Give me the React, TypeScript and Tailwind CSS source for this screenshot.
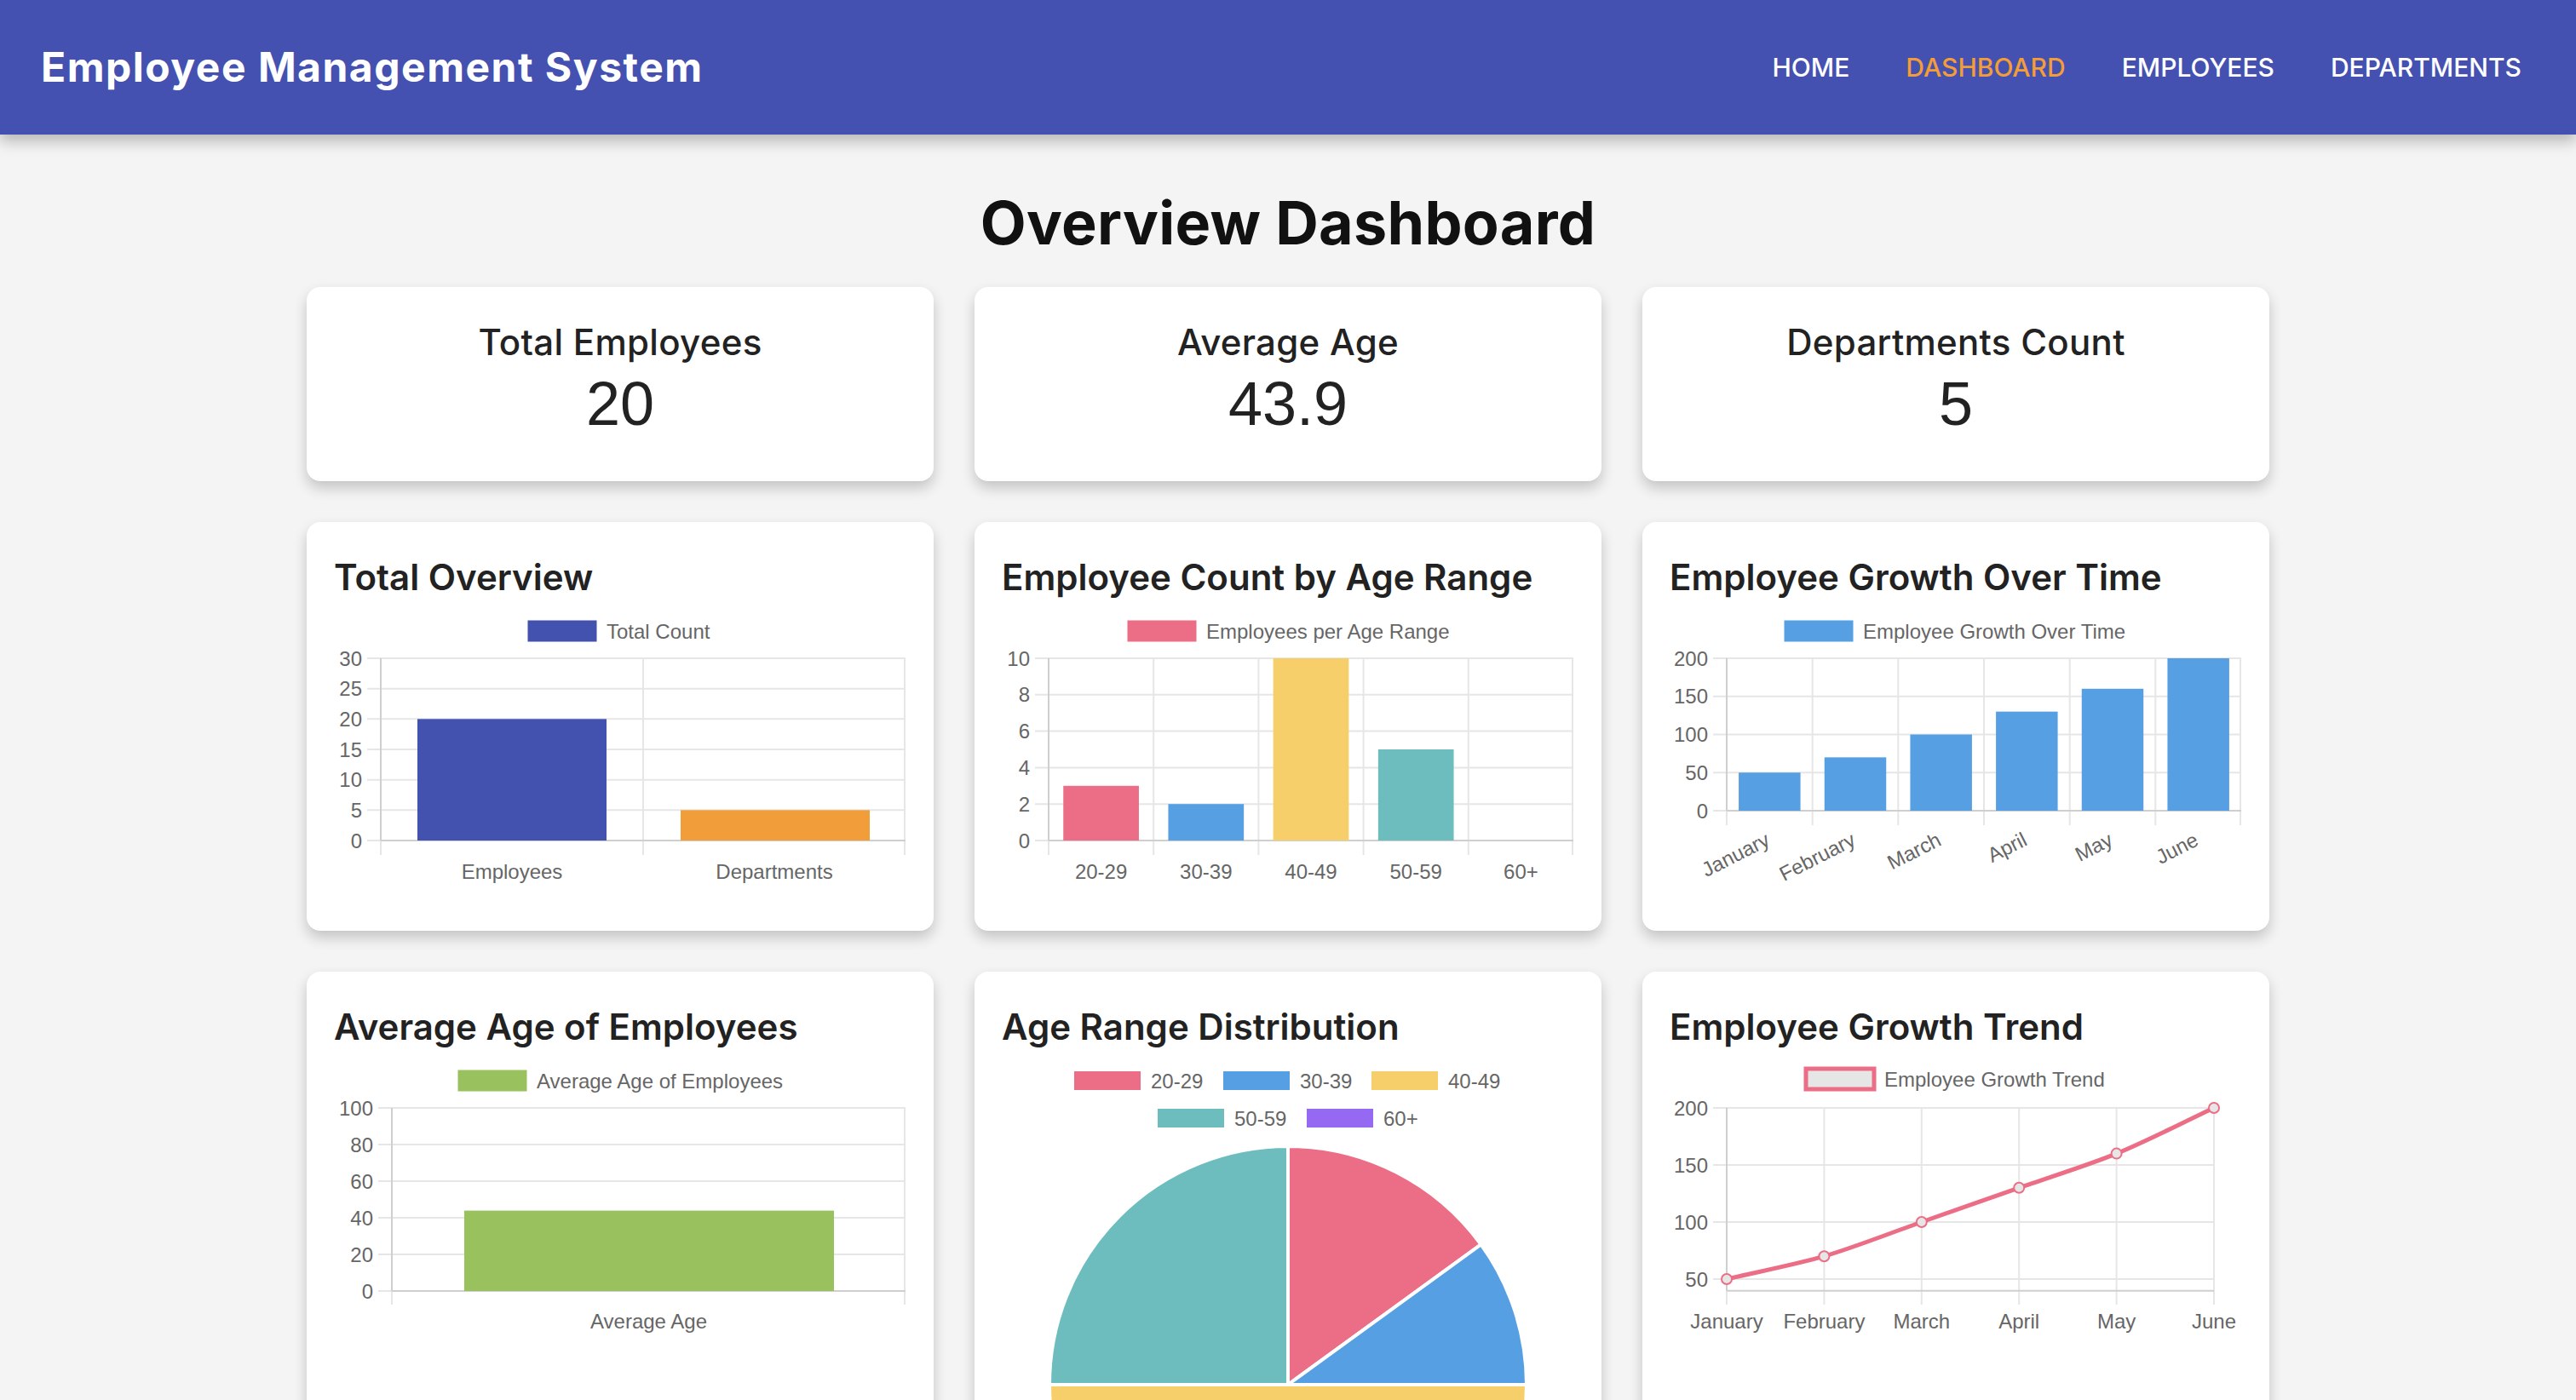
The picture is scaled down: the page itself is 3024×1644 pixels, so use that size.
import React from "react";

const FONT = "'Liberation Sans', Arial, Helvetica, sans-serif";
const GRID = "#e6e6e6";
const AXIS = "#cfcfcf";
const TXT = "#666666";

const PINK = "#eb6e86";
const BLUE = "#569fe3";
const YELLOW = "#f6cf6b";
const TEAL = "#6ebdbe";
const PURPLE = "#9669f2";
const INDIGO = "#4351af";
const ORANGE = "#f09d3a";
const GREEN = "#99c25f";

type AxesProps = {
  x0: number;
  x1: number;
  y0: number;
  y1: number;
  yTicks: number[];
  yPos: (v: number) => number;
  vLines: number[];
  tickBottom: number;
  hRight?: number;
};

function Axes({ x0, x1, y0, y1, yTicks, yPos, vLines, tickBottom, hRight }: AxesProps) {
  const right = hRight ?? x1;
  return (
    <g>
      {yTicks.map((v) => (
        <line key={"h" + v} x1={x0 - 16} x2={right} y1={yPos(v)} y2={yPos(v)} stroke={GRID} strokeWidth={2} />
      ))}
      {vLines.map((x, i) => (
        <line key={"v" + i} x1={x} x2={x} y1={y0} y2={tickBottom} stroke={GRID} strokeWidth={2} />
      ))}
      <line x1={x0} x2={x0} y1={y0} y2={y1} stroke={AXIS} strokeWidth={2} />
      <line x1={x0} x2={right} y1={y1} y2={y1} stroke={AXIS} strokeWidth={2} />
      {yTicks.map((v) => (
        <text
          key={"t" + v}
          x={x0 - 22}
          y={yPos(v)}
          textAnchor="end"
          dominantBaseline="central"
          fontFamily={FONT}
          fontSize={24}
          fill={TXT}
        >
          {v}
        </text>
      ))}
    </g>
  );
}

function Legend({ x, y = 12, fill, stroke, text }: { x: number; y?: number; fill: string; stroke?: string; text: string }) {
  return (
    <g>
      <rect x={x} y={y} width={80} height={24} fill={fill} stroke={stroke ?? fill} strokeWidth={stroke ? 5 : 1} />
      <text x={x + 92} y={y + 12} dominantBaseline="central" fontFamily={FONT} fontSize={24} fill={TXT}>
        {text}
      </text>
    </g>
  );
}

const LABEL_Y = 306;

function TotalOverviewChart() {
  const yPos = (v: number) => 270 - (v / 30) * 214;
  return (
    <svg width={671} height={335} viewBox="0 0 671 335">
      <Legend x={228} fill={INDIGO} text="Total Count" />
      <Axes x0={55} x1={671} y0={56} y1={270} yTicks={[0, 5, 10, 15, 20, 25, 30]} yPos={yPos} vLines={[55, 363, 670]} tickBottom={287} />
      <rect x={98} y={yPos(20)} width={222} height={270 - yPos(20)} fill={INDIGO} />
      <rect x={407} y={yPos(5)} width={222} height={270 - yPos(5)} fill={ORANGE} />
      {["Employees", "Departments"].map((l, i) => (
        <text key={l} x={209 + i * 308} y={LABEL_Y} textAnchor="middle" dominantBaseline="central" fontFamily={FONT} fontSize={24} fill={TXT}>
          {l}
        </text>
      ))}
    </svg>
  );
}

function AgeRangeChart() {
  const yPos = (v: number) => 270 - (v / 10) * 214;
  const cats = ["20-29", "30-39", "40-49", "50-59", "60+"];
  const vals = [3, 2, 10, 5, 0];
  const cols = [PINK, BLUE, YELLOW, TEAL, PURPLE];
  const w = (671 - 55) / 5;
  return (
    <svg width={671} height={335} viewBox="0 0 671 335">
      <Legend x={148} fill={PINK} text="Employees per Age Range" />
      <Axes
        x0={55}
        x1={671}
        y0={56}
        y1={270}
        yTicks={[0, 2, 4, 6, 8, 10]}
        yPos={yPos}
        vLines={[0, 1, 2, 3, 4, 5].map((i) => Math.min(55 + i * w, 670))}
        tickBottom={287}
      />
      {vals.map((v, i) =>
        v > 0 ? (
          <rect key={i} x={55 + i * w + w * 0.14} y={yPos(v)} width={w * 0.72} height={270 - yPos(v)} fill={cols[i]} />
        ) : null
      )}
      {cats.map((l, i) => (
        <text key={l} x={55 + i * w + w / 2} y={LABEL_Y} textAnchor="middle" dominantBaseline="central" fontFamily={FONT} fontSize={24} fill={TXT}>
          {l}
        </text>
      ))}
    </svg>
  );
}

const MONTHS = ["January", "February", "March", "April", "May", "June"];
const GROWTH = [50, 70, 100, 130, 160, 200];

function GrowthBarChart() {
  const yPos = (v: number) => 235 - (v / 200) * 179;
  const w = (671 - 67) / 6;
  return (
    <svg width={671} height={335} viewBox="0 0 671 335">
      <Legend x={135} fill={BLUE} text="Employee Growth Over Time" />
      <Axes
        x0={67}
        x1={671}
        y0={56}
        y1={235}
        yTicks={[0, 50, 100, 150, 200]}
        yPos={yPos}
        vLines={[0, 1, 2, 3, 4, 5, 6].map((i) => Math.min(67 + i * w, 670))}
        tickBottom={252}
      />
      {GROWTH.map((v, i) => (
        <rect key={i} x={67 + i * w + w * 0.14} y={yPos(v)} width={w * 0.72} height={235 - yPos(v)} fill={BLUE} />
      ))}
      {MONTHS.map((l, i) => {
        const ax = 67 + i * w + w / 2 - 2;
        const ay = 267;
        return (
          <text
            key={l}
            x={ax}
            y={ay}
            textAnchor="end"
            dominantBaseline="central"
            fontFamily={FONT}
            fontSize={24}
            fill={TXT}
            transform={`rotate(-27 ${ax} ${ay})`}
          >
            {l}
          </text>
        );
      })}
    </svg>
  );
}

function AverageAgeChart() {
  const yPos = (v: number) => 271 - (v / 100) * 215;
  return (
    <svg width={671} height={335} viewBox="0 0 671 335">
      <Legend x={146} fill={GREEN} text="Average Age of Employees" />
      <Axes x0={68} x1={671} y0={56} y1={271} yTicks={[0, 20, 40, 60, 80, 100]} yPos={yPos} vLines={[68, 670]} tickBottom={287} />
      <rect x={153} y={yPos(43.9)} width={434} height={271 - yPos(43.9)} fill={GREEN} />
      <text x={369.5} y={LABEL_Y} textAnchor="middle" dominantBaseline="central" fontFamily={FONT} fontSize={24} fill={TXT}>
        Average Age
      </text>
    </svg>
  );
}

function PieChart() {
  const cx = 336;
  const cy = 381;
  const r = 280;
  const segs = [
    { a0: 0, a1: 54, c: PINK },
    { a0: 54, a1: 90, c: BLUE },
    { a0: 90, a1: 270, c: YELLOW },
    { a0: 270, a1: 360, c: TEAL },
  ];
  const pt = (deg: number) => {
    const rad = (deg * Math.PI) / 180;
    return [cx + r * Math.sin(rad), cy - r * Math.cos(rad)];
  };
  const legend = [
    { x: 85, y: 13, c: PINK, t: "20-29" },
    { x: 260, y: 13, c: BLUE, t: "30-39" },
    { x: 434, y: 13, c: YELLOW, t: "40-49" },
    { x: 183, y: 57, c: TEAL, t: "50-59" },
    { x: 358, y: 57, c: PURPLE, t: "60+" },
  ];
  return (
    <svg width={671} height={671} viewBox="0 0 671 671">
      {legend.map((l) => (
        <g key={l.t}>
          <rect x={l.x} y={l.y} width={78} height={22} fill={l.c} />
          <text x={l.x + 90} y={l.y + 11} dominantBaseline="central" fontFamily={FONT} fontSize={24} fill={TXT}>
            {l.t}
          </text>
        </g>
      ))}
      {segs.map((s, i) => {
        const [sx, sy] = pt(s.a0);
        const [ex, ey] = pt(s.a1);
        const large = s.a1 - s.a0 > 180 ? 1 : 0;
        return (
          <path
            key={i}
            d={`M ${cx} ${cy} L ${sx} ${sy} A ${r} ${r} 0 ${large} 1 ${ex} ${ey} Z`}
            fill={s.c}
            stroke="#ffffff"
            strokeWidth={4}
            strokeLinejoin="round"
          />
        );
      })}
    </svg>
  );
}

function TrendLineChart() {
  const yPos = (v: number) => 56 + (200 - v) * 1.34;
  const xs = [67, 181.4, 295.8, 410.2, 524.6, 639];
  const pts = GROWTH.map((v, i) => ({ x: xs[i], y: yPos(v) }));
  const t = 0.3;
  const cps = pts.map((p, i) => {
    const prev = pts[i - 1] ?? p;
    const next = pts[i + 1] ?? p;
    const d01 = Math.hypot(p.x - prev.x, p.y - prev.y);
    const d12 = Math.hypot(next.x - p.x, next.y - p.y);
    const tot = d01 + d12 || 1;
    const fa = (t * d01) / tot;
    const fb = (t * d12) / tot;
    return {
      px: p.x - fa * (next.x - prev.x),
      py: p.y - fa * (next.y - prev.y),
      nx: p.x + fb * (next.x - prev.x),
      ny: p.y + fb * (next.y - prev.y),
    };
  });
  let d = `M ${pts[0].x} ${pts[0].y}`;
  for (let i = 1; i < pts.length; i++) {
    d += ` C ${cps[i - 1].nx} ${cps[i - 1].ny} ${cps[i].px} ${cps[i].py} ${pts[i].x} ${pts[i].y}`;
  }
  return (
    <svg width={671} height={335} viewBox="0 0 671 335">
      <Legend x={160} y={10} fill="#e6e6e6" stroke={PINK} text="Employee Growth Trend" />
      <Axes
        x0={67}
        x1={639}
        y0={56}
        y1={270.7}
        yTicks={[50, 100, 150, 200]}
        yPos={yPos}
        vLines={xs}
        tickBottom={287}
        hRight={639}
      />
      <path d={d} fill="none" stroke={PINK} strokeWidth={5} strokeLinecap="round" strokeLinejoin="round" />
      {pts.map((p, i) => (
        <circle key={i} cx={p.x} cy={p.y} r={6} fill="#e6e6e6" stroke={PINK} strokeWidth={2} />
      ))}
      {MONTHS.map((l, i) => (
        <text key={l} x={xs[i]} y={LABEL_Y} textAnchor="middle" dominantBaseline="central" fontFamily={FONT} fontSize={24} fill={TXT}>
          {l}
        </text>
      ))}
    </svg>
  );
}

function StatCard({ title, value }: { title: string; value: string }) {
  return (
    <div className="h-[228px] bg-white rounded-[16px] shadow-[0_8px_16px_rgba(0,0,0,0.2)] flex flex-col items-center pt-[37px]">
      <div className="font-['Inter',sans-serif] text-[42px] font-medium leading-[56px] tracking-[0.3px] text-[#222222]">{title}</div>
      <div className="mt-[4px] font-['Liberation_Sans',Arial,sans-serif] text-[72px] leading-[80px] text-[#222222]">{value}</div>
    </div>
  );
}

function ChartCard({ title, children }: { title: string; children: React.ReactNode }) {
  return (
    <div className="bg-white rounded-[16px] shadow-[0_8px_16px_rgba(0,0,0,0.2)] px-[32px] pt-[32px] pb-[41px]">
      <h2 className="font-['Inter',sans-serif] text-[42px] font-semibold leading-[65px] text-[#222222]">{title}</h2>
      <div className="mt-[7px]">{children}</div>
    </div>
  );
}

export default function App() {
  return (
    <div className="min-h-screen bg-[#f4f4f4] font-['Inter',sans-serif]">
      <header className="h-[158px] bg-[#4451b0] flex items-center justify-between pl-[48px] pr-[64px] shadow-[0_8px_16px_rgba(0,0,0,0.25)] relative z-10">
        <div className="text-white text-[48px] font-bold tracking-[1.5px]">Employee Management System</div>
        <nav className="flex items-center gap-[66px] text-[30px] font-medium">
          <a className="text-white">HOME</a>
          <a className="text-[#f29d38]">DASHBOARD</a>
          <a className="text-white">EMPLOYEES</a>
          <a className="text-white">DEPARTMENTS</a>
        </nav>
      </header>
      <main className="pb-[64px]">
        <h1 className="mt-[62px] mb-[33px] text-center text-[70px] leading-[84px] font-bold tracking-[0.3px] text-[#111111]">Overview Dashboard</h1>
        <div className="w-[2304px] mx-auto grid grid-cols-3 gap-[48px] items-stretch">
          <StatCard title="Total Employees" value="20" />
          <StatCard title="Average Age" value="43.9" />
          <StatCard title="Departments Count" value="5" />
          <ChartCard title="Total Overview">
            <TotalOverviewChart />
          </ChartCard>
          <ChartCard title="Employee Count by Age Range">
            <AgeRangeChart />
          </ChartCard>
          <ChartCard title="Employee Growth Over Time">
            <GrowthBarChart />
          </ChartCard>
          <ChartCard title="Average Age of Employees">
            <AverageAgeChart />
          </ChartCard>
          <ChartCard title="Age Range Distribution">
            <PieChart />
          </ChartCard>
          <ChartCard title="Employee Growth Trend">
            <TrendLineChart />
          </ChartCard>
        </div>
      </main>
    </div>
  );
}
